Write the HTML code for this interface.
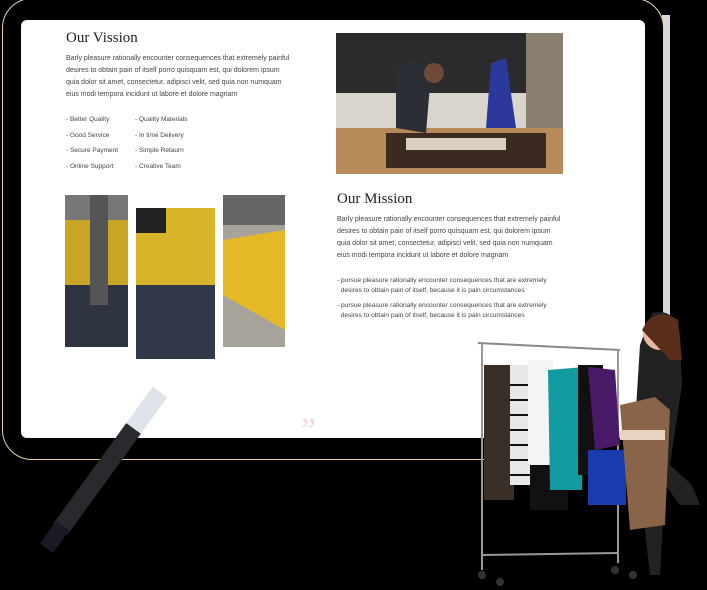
<!DOCTYPE html>
<html><head><meta charset="utf-8"><style>
*{margin:0;padding:0;box-sizing:border-box}
body{width:707px;height:590px;background:#000;position:relative;overflow:hidden;font-family:"Liberation Sans",sans-serif;color:#333}
.a{position:absolute}
.tab{left:2px;top:-2px;width:662px;height:462px;border:1.5px solid #e6cfa8;border-radius:30px;background:#000}
.scr{left:21px;top:20px;width:624px;height:418px;background:#fff;border-radius:6px}
h2{position:absolute;font-family:"Liberation Serif",serif;font-weight:normal;font-size:15px;color:#222}
.p{position:absolute;font-size:7px;line-height:12px;color:#444;white-space:nowrap}
.li{position:absolute;font-size:6.5px;color:#444;white-space:nowrap}
</style></head><body>
<div class="a" style="left:662px;top:15px;width:8px;height:440px;background:#d8d8d8"></div>
<div class="a tab"></div>
<div class="a scr"></div>
<h2 style="left:66px;top:30px">Our Vission</h2>
<div class="p" style="left:66px;top:53px">Barly pleasure rationally encounter consequences that extremely painful<br>desires to obtain pain of itself porro quisquam est, qui dolorem ipsum<br>quia dolor sit amet, consectetur, adipisci velit, sed quia non numquam<br>eius modi tempora incidunt ut labore et dolore magnam</div>
<div class="li" style="left:66px;top:116px">- Better Quality</div>
<div class="li" style="left:66px;top:132px">- Good Service</div>
<div class="li" style="left:66px;top:147px">- Secure Payment</div>
<div class="li" style="left:66px;top:163px">- Online Support</div>
<div class="li" style="left:135px;top:116px">- Quality Materials</div>
<div class="li" style="left:135px;top:132px">- In time Delivery</div>
<div class="li" style="left:135px;top:147px">- Simple Retaurn</div>
<div class="li" style="left:135px;top:163px">- Creative Team</div>

<svg class="a" style="left:336px;top:33px" width="227" height="141" viewBox="0 0 227 141">
<rect width="227" height="141" fill="#2b2b2b"/><rect x="0" y="60" width="227" height="45" fill="#d9d4cc"/>
<rect x="190" y="0" width="37" height="100" fill="#8a8070"/>
<rect x="0" y="95" width="227" height="46" fill="#b88a5a"/>
<rect x="50" y="100" width="160" height="35" fill="#3a2a20"/><rect x="70" y="105" width="100" height="12" fill="#d8d0c0"/>
<path d="M155 30 L170 25 L180 95 L150 95Z" fill="#2b3a9a"/>
<path d="M60 35 Q80 20 95 40 L90 100 L60 95Z" fill="#2c2e36"/><circle cx="98" cy="40" r="10" fill="#6b4a38"/>
</svg>
<svg class="a" style="left:65px;top:195px" width="220" height="164" viewBox="0 0 220 164">
<rect x="0" y="0" width="63" height="152" fill="#c9a526"/><rect x="0" y="0" width="63" height="25" fill="#777"/><rect x="0" y="90" width="63" height="62" fill="#2e3442"/><rect x="25" y="0" width="18" height="110" fill="#555"/>
<rect x="71" y="13" width="79" height="151" fill="#d7b42a"/><rect x="71" y="90" width="79" height="74" fill="#323a4a"/><rect x="71" y="13" width="30" height="25" fill="#222"/>
<rect x="158" y="0" width="62" height="152" fill="#a8a39a"/><path d="M158 45 L220 35 L220 135 L158 100Z" fill="#e4b826"/><rect x="158" y="0" width="62" height="30" fill="#666"/>
</svg>

<h2 style="left:337px;top:191px">Our Mission</h2>
<div class="p" style="left:337px;top:214px">Barly pleasure rationally encounter consequences that extremely painful<br>desires to obtain pain of itself porro quisquam est, qui dolorem ipsum<br>quia dolor sit amet, consectetur, adipisci velit, sed quia non numquam<br>eius modi tempora incidunt ut labore et dolore magnam</div>
<div class="p" style="left:337px;top:276px;font-size:6.6px;line-height:10px">- pursue pleasure rationally encounter consequences that are extremely<br>&nbsp;&nbsp;desires to obtain pain of itself, because it is pain circumstances</div>
<div class="p" style="left:337px;top:301px;font-size:6.6px;line-height:10px">- pursue pleasure rationally encounter consequences that are extremely<br>&nbsp;&nbsp;desires to obtain pain of itself, because it is pain circumstances</div>
<div class="a" style="left:301px;top:412px;font-family:'Liberation Serif',serif;font-size:34px;color:#f0d8d8">”</div>

<svg class="a" style="left:0px;top:380px" width="200" height="190" viewBox="0 0 200 190">
<g transform="translate(160,12) rotate(36)"><rect x="-9" y="0" width="18" height="45" fill="#dfe4ea"/><rect x="-9" y="45" width="18" height="125" fill="#2a2a2e"/><rect x="-8" y="165" width="16" height="28" fill="#1a1a26"/></g>
</svg>

<svg class="a" style="left:470px;top:305px" width="237" height="285" viewBox="0 0 237 285">
<line x1="8" y1="38" x2="150" y2="45" stroke="#888" stroke-width="2"/>
<line x1="12" y1="38" x2="12" y2="265" stroke="#999" stroke-width="2"/><line x1="148" y1="45" x2="148" y2="258" stroke="#999" stroke-width="2"/>
<line x1="12" y1="250" x2="148" y2="248" stroke="#999" stroke-width="2"/>
<circle cx="12" cy="270" r="4" fill="#333"/><circle cx="30" cy="277" r="4" fill="#333"/><circle cx="145" cy="265" r="4" fill="#333"/><circle cx="163" cy="270" r="4" fill="#333"/>
<rect x="14" y="60" width="30" height="135" fill="#3a3028"/>
<rect x="40" y="60" width="20" height="120" fill="#e8e8e8"/><g stroke="#111" stroke-width="2"><line x1="40" y1="80" x2="60" y2="80"/><line x1="40" y1="95" x2="60" y2="95"/><line x1="40" y1="110" x2="60" y2="110"/><line x1="40" y1="125" x2="60" y2="125"/><line x1="40" y1="140" x2="60" y2="140"/><line x1="40" y1="155" x2="60" y2="155"/><line x1="40" y1="170" x2="60" y2="170"/></g>
<rect x="58" y="55" width="25" height="105" fill="#f4f4f4"/><rect x="60" y="160" width="38" height="45" fill="#111"/>
<path d="M78 65 L115 62 L112 185 L80 185Z" fill="#119aa0"/>
<rect x="108" y="60" width="25" height="110" fill="#111"/><path d="M118 62 L145 65 L150 140 L125 145Z" fill="#4a1a6a"/><rect x="118" y="145" width="38" height="55" fill="#1a3bb0"/>
<path d="M182 8 Q205 2 210 30 L212 80 L200 160 L222 180 L230 200 L210 200 L195 180 L190 270 L180 270 L170 180 L165 120 L170 40Z" fill="#222"/>
<circle cx="190" cy="28" r="17" fill="#e8b8a0"/><path d="M172 25 Q185 0 208 15 L212 55 L200 55 Z" fill="#5a2e1a"/>
<path d="M150 100 L185 92 L200 105 L195 220 L160 225 Z" fill="#8a6448"/><rect x="150" y="125" width="45" height="10" fill="#e8d2c0"/>
</svg>
</body></html>
